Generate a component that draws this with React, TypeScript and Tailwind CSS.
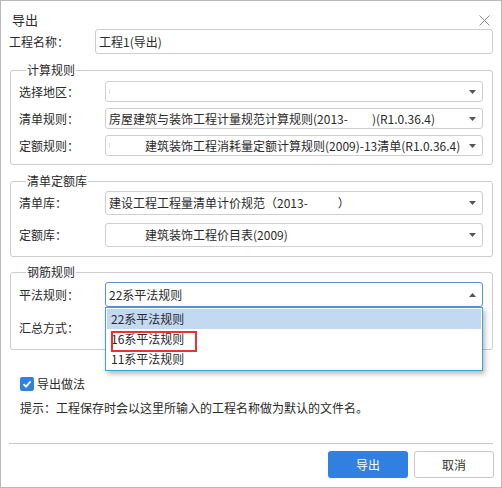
import React from "react";

const FONT = '"Noto Sans CJK SC", "Microsoft YaHei", "Noto Sans", sans-serif';

function Caret({ up = false }: { up?: boolean }) {
  return (
    <svg width="7" height="4" viewBox="0 0 7 4" className="shrink-0">
      {up ? <polygon points="0,4 7,4 3.5,0" fill="#555" /> : <polygon points="0,0 7,0 3.5,4" fill="#555" />}
    </svg>
  );
}

function Select({
  children,
  h,
  focused = false,
}: {
  children: React.ReactNode;
  h: string;
  focused?: boolean;
}) {
  return (
    <div
      className={`${h} w-[378px] flex items-center justify-between pl-[3px] pr-[6px] rounded-[3px] border bg-white ${
        focused ? "border-[#5b8fdc]" : "border-[#cfcfcf]"
      }`}
    >
      <div className="flex items-center whitespace-nowrap overflow-hidden leading-[16px]">{children}</div>
      <Caret up={focused} />
    </div>
  );
}

function Row({ label, children, h }: { label: string; children: React.ReactNode; h: string }) {
  return (
    <div className={`flex items-center ${h}`}>
      <div className="w-[86px] shrink-0 leading-[16px]">{label}</div>
      {children}
    </div>
  );
}

function Group({ title, children, className }: { title: string; children: React.ReactNode; className: string }) {
  return (
    <fieldset className={`mx-[9px] mr-[8px] border border-[#cccccc] rounded-[3px] pl-[8px] pr-[9px] ${className}`}>
      <legend className="ml-[7px] px-[1px] leading-[16px] text-[12px]">{title}</legend>
      {children}
    </fieldset>
  );
}

const Blank = ({ w }: { w: string }) => <span className={`inline-block ${w}`} />;
const Tick = () => <span className="inline-block w-[1px] h-[5px] bg-[#e2e2e2] mr-[1px]" />;

export default function App() {
  return (
    <div
      className="w-[502px] h-[488px] border border-[#b9b9b9] bg-white text-[12px] text-[#2a2a2a] flex flex-col"
      style={{ fontFamily: FONT }}
    >
      {/* title bar */}
      <div className="h-[28px] pt-[10px] pl-[11px] pr-[11px] flex justify-between items-start">
        <span className="text-[13px] leading-[18px]">导出</span>
        <div className="h-[18px] flex items-center">
          <svg width="11" height="11" viewBox="0 0 11 11">
            <path d="M0.5 0.5 L10.5 10.5 M10.5 0.5 L0.5 10.5" stroke="#8a8a8a" strokeWidth="1" />
          </svg>
        </div>
      </div>

      {/* project name */}
      <div className="h-[25px] flex items-center">
        <div className="w-[94px] pl-[8px] leading-[16px]">工程名称：</div>
        <div className="w-[398px] h-[25px] border border-[#cfcfcf] rounded-[3px] flex items-center pl-[3px] leading-[16px]">
          工程1(导出)
        </div>
      </div>

      <Group title="计算规则" className="mt-[8px] pb-[8px]">
        <div className="flex flex-col gap-[6px] mt-[3px]">
          <Row label="选择地区：" h="h-[21px]">
            <Select h="h-[21px]">
              <Tick />
            </Select>
          </Row>
          <Row label="清单规则：" h="h-[21px]">
            <Select h="h-[21px]">
              <span>房屋建筑与装饰工程计量规范计算规则(2013-</span>
              <Blank w="w-[24px]" />
              <span>)(R1.0.36.4)</span>
            </Select>
          </Row>
          <Row label="定额规则：" h="h-[21px]">
            <Select h="h-[21px]">
              <Tick />
              <Blank w="w-[34px]" />
              <span>建筑装饰工程消耗量定额计算规则(2009)-13清单(R1.0.36.4)</span>
            </Select>
          </Row>
        </div>
      </Group>

      <Group title="清单定额库" className="mt-[8px] pb-[9px]">
        <div className="flex flex-col gap-[8px] mt-[2px]">
          <Row label="清单库：" h="h-[24px]">
            <Select h="h-[24px]">
              <span>建设工程工程量清单计价规范（2013-</span>
              <Blank w="w-[30px]" />
              <span>）</span>
            </Select>
          </Row>
          <Row label="定额库：" h="h-[24px]">
            <Select h="h-[24px]">
              <Blank w="w-[36px]" />
              <span>建筑装饰工程价目表(2009)</span>
            </Select>
          </Row>
        </div>
      </Group>

      <Group title="钢筋规则" className="mt-[7px] pb-[9px]">
        <div className="flex flex-col gap-[9px] mt-[2px]">
          <Row label="平法规则：" h="h-[25px]">
            <div className="relative">
              <Select h="h-[25px]" focused>
                <span>22系平法规则</span>
              </Select>
              {/* open option list */}
              <div className="absolute left-0 top-[25px] w-[378px] z-10 border border-[#3aa6d8] bg-white p-[1px] shadow-[2px_3px_5px_rgba(0,0,0,0.28)]">
                <div className="h-[20px] bg-[#c3d9f1] flex items-center pl-[4px] leading-[16px]">22系平法规则</div>
                <div className="h-[20px] flex items-center pl-[4px] leading-[16px]">16系平法规则</div>
                <div className="h-[20px] flex items-center pl-[4px] leading-[16px]">11系平法规则</div>
                <div className="absolute left-[5px] top-[23px] w-[86px] h-[21px] border-2 border-[#ee3030]" />
              </div>
            </div>
          </Row>
          <Row label="汇总方式：" h="h-[24px]">
            <div />
          </Row>
        </div>
      </Group>

      {/* export method */}
      <div className="mt-[27px] ml-[19px] h-[14px] flex items-center gap-[3px]">
        <div className="w-[14px] h-[14px] rounded-[2px] bg-[#2f80e0] flex items-center justify-center">
          <svg width="10" height="10" viewBox="0 0 10 10">
            <path d="M1.5 5.2 L4 7.6 L8.6 2.4" stroke="#fff" strokeWidth="1.8" fill="none" />
          </svg>
        </div>
        <span className="leading-[16px]">导出做法</span>
      </div>

      <div className="mt-[9px] ml-[19px] leading-[16px]">提示：工程保存时会以这里所输入的工程名称做为默认的文件名。</div>

      <div className="mt-[27px] mx-[8px] h-[1px] bg-[#c9c9c9]" />

      <div className="mt-[7px] pr-[7px] flex justify-end gap-[6px]">
        <button className="w-[80px] h-[27px] rounded-[3px] bg-[#2f80e0] text-white leading-[16px]">导出</button>
        <button className="w-[80px] h-[27px] rounded-[3px] border border-[#c8c8c8] bg-white text-[#333] leading-[16px]">
          取消
        </button>
      </div>
    </div>
  );
}
